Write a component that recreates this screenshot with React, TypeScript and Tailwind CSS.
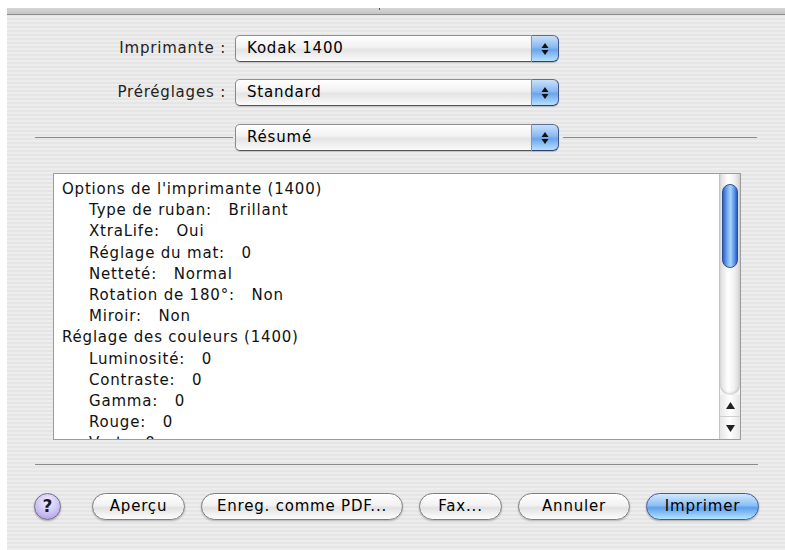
import React from "react";

const font = { fontFamily: '"DejaVu Sans", "Liberation Sans", sans-serif' };

const lines: { text: string; indent?: boolean }[] = [
  { text: "Options de l'imprimante (1400)" },
  { text: "Type de ruban:   Brillant", indent: true },
  { text: "XtraLife:   Oui", indent: true },
  { text: "Réglage du mat:   0", indent: true },
  { text: "Netteté:   Normal", indent: true },
  { text: "Rotation de 180°:   Non", indent: true },
  { text: "Miroir:   Non", indent: true },
  { text: "Réglage des couleurs (1400)" },
  { text: "Luminosité:   0", indent: true },
  { text: "Contraste:   0", indent: true },
  { text: "Gamma:   0", indent: true },
  { text: "Rouge:   0", indent: true },
  { text: "Vert:   0", indent: true },
];

const UpDown = () => (
  <svg width="8" height="14" viewBox="0 0 8 14">
    <polygon points="4,1 7.5,6 0.5,6" fill="#111" />
    <polygon points="0.5,8 7.5,8 4,13" fill="#111" />
  </svg>
);

const Popup = ({ label }: { label: string }) => (
  <div className="flex h-[27px] w-[324px]">
    <div className="flex flex-1 items-center rounded-l-[5px] border border-r-0 border-t-[#8f8f8f] border-l-[#8a8a8a] border-b-[#555] bg-[linear-gradient(#ffffff,#f1f1f1_45%,#e4e4e4_55%,#fbfbfb)] pl-[11px] text-[15px] tracking-[0.8px] text-black shadow-[0_1px_1px_rgba(0,0,0,0.15)]">
      {label}
    </div>
    <div className="flex w-[28px] items-center justify-center rounded-r-[6px] border border-t-[#5a6f98] border-r-[#3e5585] border-b-[#2d4270] border-l-[#7d97c4] bg-[linear-gradient(#c9e0fb,#8ab8f0_45%,#6aa4ec_55%,#b7e0ff)] shadow-[0_1px_1px_rgba(0,0,0,0.2)]">
      <UpDown />
    </div>
  </div>
);

const Pill = ({ label, w, blue }: { label: string; w: string; blue?: boolean }) => (
  <button
    className={
      blue
        ? `flex h-[27px] ${w} items-center justify-center rounded-full border border-[#3d5a9e] bg-[linear-gradient(#d2e8ff,#8dc0f5_45%,#5fa0ec_55%,#b5e4ff)] text-[15px] tracking-[0.8px] text-black shadow-[0_1px_2px_rgba(0,0,0,0.3)]`
        : `flex h-[27px] ${w} items-center justify-center rounded-full border border-[#7d7d7d] bg-[linear-gradient(#ffffff,#f2f2f2_45%,#e2e2e2_55%,#fdfdfd)] text-[15px] tracking-[0.8px] text-black shadow-[0_1px_2px_rgba(0,0,0,0.25)]`
    }
  >
    {label}
  </button>
);

const Scrollbar = () => (
  <div className="flex w-[21px] flex-col border-l border-[#c4c4c4] bg-[#f4f4f4]">
    <div className="flex flex-1 flex-col rounded-b-full bg-[linear-gradient(90deg,#dcdcdc,#ffffff_40%,#f2f2f2_70%,#d4d4d4)] px-[2px] pt-[10px] shadow-[inset_0_-2px_2px_rgba(0,0,0,0.12)]">
      <div className="h-[84px] w-[16px] rounded-full border border-[#2c4f9a] bg-[linear-gradient(90deg,#2f62c4,#7fb5f5_35%,#a8d2ff_55%,#4d8ae6_85%,#2b5cbc)]" />
    </div>
    <div className="flex h-[22px] items-center justify-center border-b border-[#d0d0d0] bg-[linear-gradient(90deg,#e6e6e6,#ffffff_50%,#e6e6e6)]">
      <svg width="9" height="7" viewBox="0 0 9 7">
        <polygon points="4.5,0 9,7 0,7" fill="#222" />
      </svg>
    </div>
    <div className="flex h-[22px] items-center justify-center bg-[linear-gradient(90deg,#e6e6e6,#ffffff_50%,#e6e6e6)]">
      <svg width="9" height="7" viewBox="0 0 9 7">
        <polygon points="0,0 9,0 4.5,7" fill="#222" />
      </svg>
    </div>
  </div>
);

export default function App() {
  return (
    <div className="h-[550px] w-[785px] overflow-hidden bg-white pl-[7px] pt-[8px]" style={font}>
      <div className="flex h-full flex-col bg-[#ececec] bg-[image:repeating-linear-gradient(0deg,#ededed_0px,#ededed_2px,#e5e5e5_2px,#e5e5e5_4px)]">
        {/* sheet top edge */}
        <div className="relative h-[7px] border-b border-[#8c8c8c] bg-[linear-gradient(#d6d6d6,#c4c4c4)]">
          <div className="absolute left-[372px] top-0 h-[2px] w-[1px] bg-[#555]" />
        </div>

        <div className="mt-[20px] flex items-center">
          <div className="w-[219px] text-right text-[15px] tracking-[0.8px] text-[#222]">Imprimante :</div>
          <div className="ml-[9px]">
            <Popup label="Kodak 1400" />
          </div>
        </div>

        <div className="mt-[17px] flex items-center">
          <div className="w-[219px] text-right text-[15px] tracking-[0.8px] text-[#222]">Préréglages :</div>
          <div className="ml-[9px]">
            <Popup label="Standard" />
          </div>
        </div>

        <div className="mt-[18px] flex items-center">
          <div className="ml-[28px] h-px w-[198px] bg-[#8a8a8a]" />
          <div className="ml-[2px]">
            <Popup label="Résumé" />
          </div>
          <div className="ml-[4px] h-px w-[194px] bg-[#8a8a8a]" />
        </div>

        <div className="ml-[46px] mt-[22px] flex h-[267px] w-[688px] border border-[#9b9b9b] bg-white">
          <div className="flex-1 overflow-hidden pl-[8px] pt-[5px] text-[15px] leading-[21.2px] tracking-[0.8px] text-[#111]">
            {lines.map((l) => (
              <div key={l.text} className={`whitespace-pre ${l.indent ? "pl-[27px]" : ""}`}>
                {l.text}
              </div>
            ))}
          </div>
          <Scrollbar />
        </div>

        <div className="ml-[28px] mt-[24px] h-px w-[723px] bg-[#8a8a8a]" />

        <div className="ml-[27px] mt-[28px] flex items-center">
          <div className="flex h-[27px] w-[27px] items-center justify-center rounded-full border border-[#6f6f80] bg-[radial-gradient(circle_at_50%_30%,#f4f0ff,#c9bdf2_60%,#a292dc)] text-[17px] font-bold text-[#1a1a2e] shadow-[0_1px_2px_rgba(0,0,0,0.3)]">
            ?
          </div>
          <div className="ml-[31px] flex gap-[16px]">
            <Pill label="Aperçu" w="w-[93px]" />
            <Pill label="Enreg. comme PDF..." w="w-[202px]" />
            <Pill label="Fax..." w="w-[83px]" />
            <Pill label="Annuler" w="w-[112px]" />
            <Pill label="Imprimer" w="w-[113px]" blue />
          </div>
        </div>
      </div>
    </div>
  );
}
